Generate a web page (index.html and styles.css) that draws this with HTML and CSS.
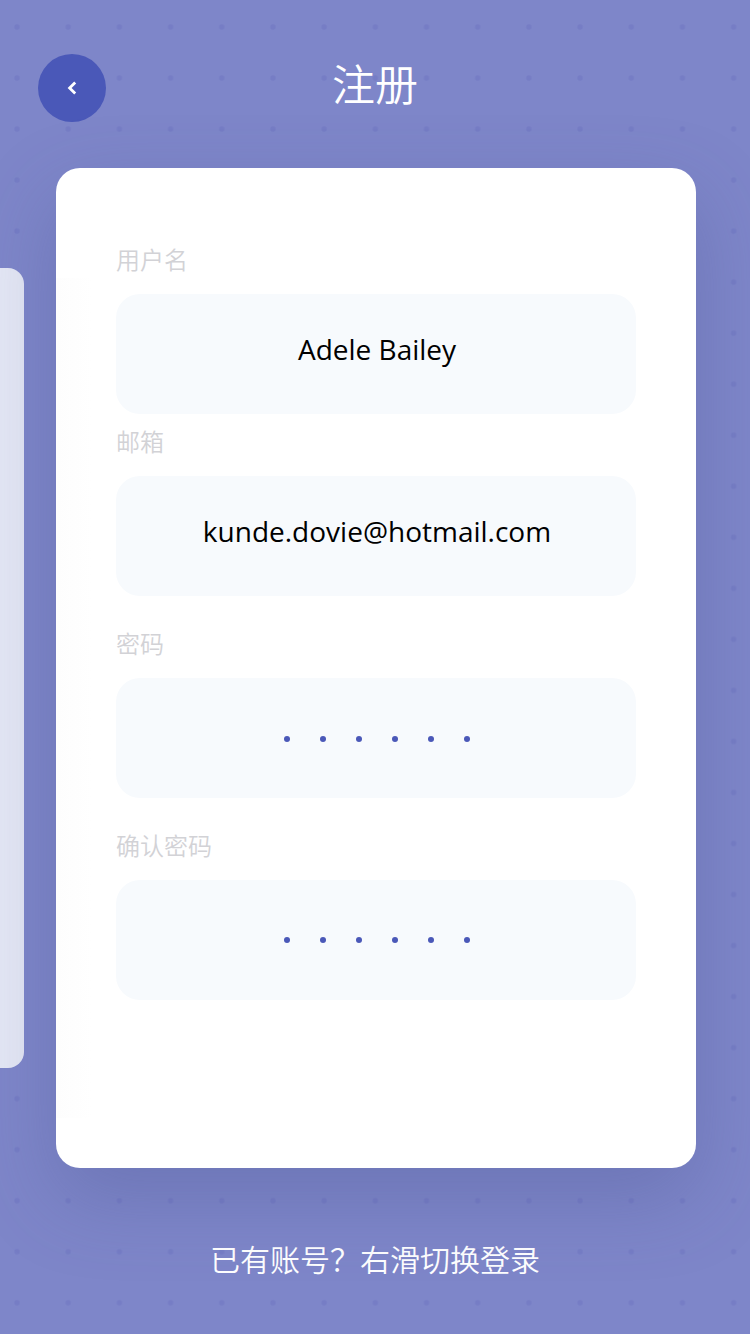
FILE: index.html
```html
<!DOCTYPE html>
<html lang="zh">
<head>
<meta charset="utf-8">
<title>注册</title>
<link rel="stylesheet" href="styles.css">
</head>
<body>
<div class="page">
  <div class="side-card"></div>
  <header class="topbar">
    <button class="back" type="button" aria-label="返回">
      <svg class="back-icon" width="12" height="16" viewBox="0 0 12 16"><path d="M9.200 2.400 3.600 8l5.600 5.600" fill="none" stroke="#fff" stroke-width="2.800"/></svg>
    </button>
    <h1 class="title">注册</h1>
  </header>
  <main class="card">
    <div class="field field-first">
      <label class="label">用户名</label>
      <div class="input">Adele Bailey</div>
    </div>
    <div class="field">
      <label class="label">邮箱</label>
      <div class="input">kunde.dovie@hotmail.com</div>
    </div>
    <div class="field">
      <label class="label">密码</label>
      <div class="input dots"><i></i><i></i><i></i><i></i><i></i><i></i></div>
    </div>
    <div class="field">
      <label class="label">确认密码</label>
      <div class="input dots"><i></i><i></i><i></i><i></i><i></i><i></i></div>
    </div>
  </main>
  <footer class="switch">已有账号？右滑切换登录</footer>
</div>
</body>
</html>
```
FILE: styles.css
```css
* { box-sizing: border-box; }
html, body { margin: 0; padding: 0; }
body { width: 750px; height: 1334px; overflow: hidden; font-family: "Open Sans", "Noto Sans CJK SC", sans-serif; }
.page {
  position: relative;
  width: 750px;
  height: 1334px;
  overflow: hidden;
  padding-top: 54px;
  background-color: #7e86c9;
  background-image: radial-gradient(circle at center, #767dc5 0, #767dc5 2px, rgba(118,125,197,0) 3.500px);
  background-size: 51.2px 51.04px;
  background-position: -8.600px 1.500px;
}
.side-card {
  position: absolute;
  left: -40px;
  top: 268px;
  width: 64px;
  height: 800px;
  border-radius: 16px;
  background: #e5e8f5;
}
.topbar { position: relative; height: 68px; margin: 0 0 46px 38px; }
.back {
  display: flex;
  align-items: center;
  justify-content: center;
  width: 68px;
  height: 68px;
  padding: 0;
  border: 0;
  border-radius: 50%;
  background: #4a58b8;
}
.title {
  position: absolute;
  left: 262px;
  top: -2px;
  width: 150px;
  margin: 0;
  text-align: center;
  font-size: 43px;
  line-height: 60px;
  font-weight: 350;
  color: #fff;
  font-family: "Noto Sans CJK SC", sans-serif;
}
.card {
  position: relative;
  width: 640px;
  height: 1000px;
  margin-left: 56px;
  padding: 74px 60px 0;
  border-radius: 24px;
  background: linear-gradient(90deg, #fdfdfd, #fff) 0 110px / 36px 840px no-repeat, #fff;
  box-shadow: 0 30px 80px rgba(70, 78, 140, 0.3);
}
.field { margin-bottom: 30px; }
.field-first { margin-bottom: 10px; }
.label {
  display: block;
  height: 52px;
  font-size: 24px;
  line-height: 34px;
  font-weight: 350;
  color: #d2d2d6;
  font-family: "Noto Sans CJK SC", sans-serif;
}
.input {
  display: flex;
  align-items: center;
  justify-content: center;
  width: 520px;
  height: 120px;
  padding: 0 0 10px 2px;
  border-radius: 24px;
  background: #f7fafd;
  font-size: 28px;
  color: #000;
}
.dots { gap: 30px; padding: 2px 0 0 2px; }
.field:last-child .dots { padding-top: 0; }
.dots i { display: block; width: 6px; height: 6px; border-radius: 50%; background: #4a58b8; }
.switch {
  margin-top: 68px;
  text-align: center;
  font-size: 30px;
  line-height: 44px;
  font-weight: 350;
  color: #fff;
  font-family: "Noto Sans CJK SC", sans-serif;
}
```
